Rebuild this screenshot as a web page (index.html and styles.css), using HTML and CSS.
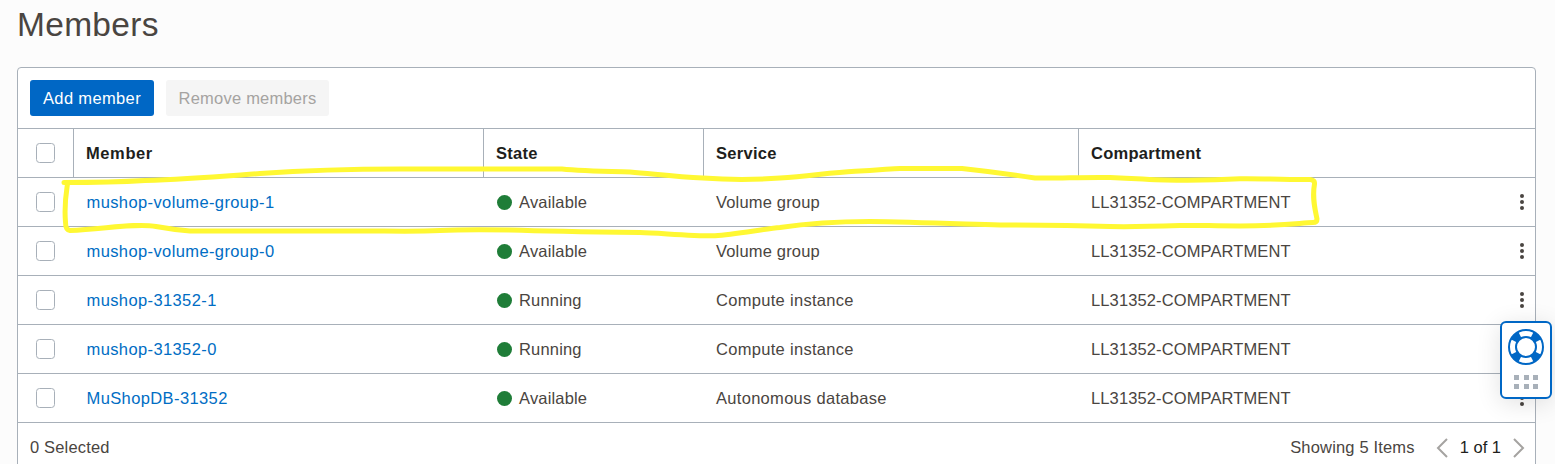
FILE: index.html
```html
<!DOCTYPE html>
<html lang="en">
<head>
<meta charset="utf-8">
<title>Members</title>
<link rel="stylesheet" href="styles.css">
</head>
<body>
<main class="page">
  <h1 class="title">Members</h1>
  <section class="card">
    <div class="toolbar">
      <button class="btn btn-primary">Add member</button>
      <button class="btn btn-disabled" disabled>Remove members</button>
    </div>
    <div class="row head">
      <div class="cell check"><span class="box"></span></div>
      <div class="cell"><span class="wide">Member</span></div>
      <div class="cell"><span>State</span></div>
      <div class="cell"><span>Service</span></div>
      <div class="cell"><span>Compartment</span></div>
    </div>
    <div class="row">
      <div class="cell check"><span class="box"></span></div>
      <div class="cell"><a class="link">mushop-volume-group-1</a></div>
      <div class="cell"><i class="dot"></i><span class="state">Available</span></div>
      <div class="cell"><span>Volume group</span></div>
      <div class="cell"><span class="comp">LL31352-COMPARTMENT</span><span class="more"><i></i><i></i><i></i></span></div>
    </div>
    <div class="row">
      <div class="cell check"><span class="box"></span></div>
      <div class="cell"><a class="link">mushop-volume-group-0</a></div>
      <div class="cell"><i class="dot"></i><span class="state">Available</span></div>
      <div class="cell"><span>Volume group</span></div>
      <div class="cell"><span class="comp">LL31352-COMPARTMENT</span><span class="more"><i></i><i></i><i></i></span></div>
    </div>
    <div class="row">
      <div class="cell check"><span class="box"></span></div>
      <div class="cell"><a class="link">mushop-31352-1</a></div>
      <div class="cell"><i class="dot"></i><span class="state">Running</span></div>
      <div class="cell"><span class="loose">Compute instance</span></div>
      <div class="cell"><span class="comp">LL31352-COMPARTMENT</span><span class="more"><i></i><i></i><i></i></span></div>
    </div>
    <div class="row">
      <div class="cell check"><span class="box"></span></div>
      <div class="cell"><a class="link">mushop-31352-0</a></div>
      <div class="cell"><i class="dot"></i><span class="state">Running</span></div>
      <div class="cell"><span class="loose">Compute instance</span></div>
      <div class="cell"><span class="comp">LL31352-COMPARTMENT</span><span class="more"><i></i><i></i><i></i></span></div>
    </div>
    <div class="row">
      <div class="cell check"><span class="box"></span></div>
      <div class="cell"><a class="link">MuShopDB-31352</a></div>
      <div class="cell"><i class="dot"></i><span class="state">Available</span></div>
      <div class="cell"><span class="loose">Autonomous database</span></div>
      <div class="cell"><span class="comp">LL31352-COMPARTMENT</span><span class="more"><i></i><i></i><i></i></span></div>
    </div>
    <div class="footer">
      <span>0 Selected</span>
      <div class="pager">
        <span class="showing">Showing 5 Items</span>
        <svg class="chev" width="12" height="20" viewBox="0 0 12 20"><path d="M11 1 2 10l9 9"/></svg>
        <span class="count">1 of 1</span>
        <svg class="chev" width="12" height="20" viewBox="0 0 12 20"><path d="m1 1 9 9-9 9"/></svg>
      </div>
    </div>
  </section>
</main>

<svg class="highlight" width="1555" height="464" viewBox="0 0 1555 464">
  <path d="M64 182.5C100 182.500 120 182 145 180.500C190 179 225 176 260 173.500C310 170 350 169 400 169H562C580 171 610 171.500 630 172C655 174 675 177 703 178C730 180 760 179.500 780 178C810 176 830 172.500 855 171.200C880 170.500 890 168.500 900 168.500H962C985 171 1015 175 1035 178C1060 178.500 1080 177 1110 177.500C1140 178.500 1150 180 1165 180C1195 180.500 1220 180 1240 178.800C1260 178.500 1290 179.500 1310 179.500Q1315 180 1314.500 184C1312 198 1315 209 1317 219Q1317 222.500 1313 222.500C1300 223 1280 226 1240 226C1210 226 1200 225 1180 225.500C1150 226.500 1130 227 1110 226.500C1080 225.500 1040 225 1000 225C950 223.500 910 222 870 221.500C835 221.500 810 223 780 227.500C765 229 735 234 715 235.800C690 236 660 233 640 232.500C600 232 540 231 510 230C480 229.500 460 229.500 440 230.500C420 231.500 400 231.200 380 231H190C178 230 167 228.500 156 226.500C135 223 105 229 70 230.500Q65.500 230 65.500 222C64 205 66 194 67.500 184"/>
</svg>

<aside class="help">
  <svg width="36" height="36" viewBox="0 0 36 36">
    <circle class="band" cx="18" cy="18" r="13.500"/>
    <circle class="gap" cx="18" cy="18" r="13.500" pathLength="360"/>
    <circle class="rim" cx="18" cy="18" r="17"/>
    <circle class="rim" cx="18" cy="18" r="10"/>
  </svg>
  <span class="grip"><i></i><i></i><i></i><i></i><i></i><i></i></span>
</aside>
</body>
</html>
```

FILE: styles.css
```css
* { box-sizing: border-box; }

body {
  margin: 0;
  height: 464px;
  overflow: hidden;
  background: #fcfcfc;
  color: #4a4541;
  font: 16.5px/20px "Liberation Sans", Arial, sans-serif;
  letter-spacing: .17px;
}

.page { padding: 5px 19px 0 17px; }

.title {
  margin: 0 0 22px;
  font-size: 33.5px;
  line-height: 40px;
  font-weight: 400;
  letter-spacing: .3px;
}

.card {
  height: 420px;
  border: 1px solid #a8b0b9;
  border-radius: 4px 4px 0 0;
  background: #fff;
}

.toolbar {
  display: flex;
  gap: 12px;
  height: 61px;
  padding: 12px;
  border-bottom: 1px solid #a8b0b9;
}

.btn {
  height: 36px;
  padding: 0;
  border: 0;
  border-radius: 3px;
  font: inherit;
  letter-spacing: .22px;
}
.btn-primary { width: 124px; background: #0067c5; color: #fff; letter-spacing: .35px; }
.btn-disabled { width: 163px; background: #f5f5f5; color: #a5a3a1; }

.row {
  display: grid;
  grid-template-columns: 56px 410px 220px 375px 456px;
  height: 49px;
  border-bottom: 1px solid #a8b0b9;
}

.cell {
  display: flex;
  align-items: center;
  padding: 0 11px 1px 12px;
  border-right: 1px solid transparent;
}
.cell:last-child { padding-right: 11px; border-right: 0; }

.head { color: #201e1c; font-weight: 700; letter-spacing: .28px; }
.head .cell:not(:last-child) { border-right-color: #a8b0b9; }
.wide { letter-spacing: .6px; }

.check { padding: 0 0 0 18px; }
.box {
  width: 19px;
  height: 20px;
  border: 1px solid #a8b0b9;
  border-radius: 3.5px;
}

.link { padding-left: .5px; color: #006dc4; letter-spacing: .39px; }
.loose { letter-spacing: .3px; }
.comp { letter-spacing: .12px; }

.dot {
  width: 15px;
  height: 15px;
  margin: 1px 7px 0 1px;
  border-radius: 50%;
  background: #1f7d38;
}

.more {
  display: grid;
  gap: 2.3px;
  margin: 1px 0 0 auto;
}
.more i {
  width: 4px;
  height: 4px;
  border-radius: 50%;
  background: #4a4541;
}

.footer {
  display: flex;
  align-items: center;
  justify-content: space-between;
  height: 49px;
  padding: 0 10px 1px 12px;
}
.pager { display: flex; align-items: center; }
.showing { margin-right: 21px; }
.count { margin: 0 12px; color: #201e1c; letter-spacing: 0; }
.chev { margin-top: 2px; fill: none; stroke: #a5a3a1; stroke-width: 2; }

/* Hand-drawn marker around the first row */
.highlight {
  position: absolute;
  top: 0;
  left: 0;
  fill: none;
  stroke: #fff833;
  stroke-width: 5;
  stroke-linecap: round;
  stroke-linejoin: round;
}

/* Floating support widget */
.help {
  position: absolute;
  top: 321px;
  left: 1500px;
  display: flex;
  flex-direction: column;
  align-items: center;
  gap: 10px;
  width: 52px;
  height: 78px;
  padding-top: 6px;
  border: 2px solid #0067c5;
  border-radius: 6px;
  background: #fff;
  box-shadow: 0 4px 24px rgba(0, 0, 0, .12);
}
.band { fill: none; stroke: #0067c5; stroke-width: 7; }
.gap {
  fill: none;
  stroke: #fff;
  stroke-width: 7;
  stroke-dasharray: 54 36;
  stroke-dashoffset: 27;
}
.rim { fill: none; stroke: #0067c5; stroke-width: 2; }
.grip {
  display: grid;
  grid-template-columns: repeat(3, 5px);
  gap: 4px 4.500px;
}
.grip i { height: 5px; background: #a8b0b9; }
```
